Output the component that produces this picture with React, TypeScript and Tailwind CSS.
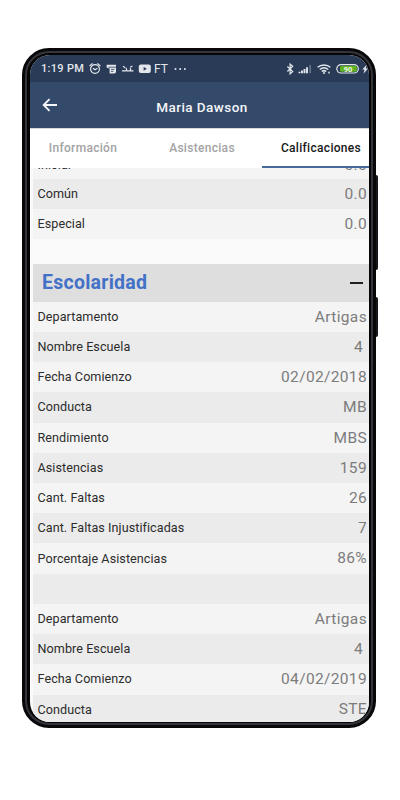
import React from 'react';

interface RowData {
    label: string;
    value: string;
    inset?: boolean;
    lowered?: boolean;
}

const records: RowData[] = [
    { label: 'Departamento', value: 'Artigas' },
    { label: 'Nombre Escuela', value: '4', inset: true },
    { label: 'Fecha Comienzo', value: '02/02/2018' },
    { label: 'Conducta', value: 'MB' },
    { label: 'Rendimiento', value: 'MBS' },
    { label: 'Asistencias', value: '159' },
    { label: 'Cant. Faltas', value: '26' },
    { label: 'Cant. Faltas Injustificadas', value: '7' },
    { label: 'Porcentaje Asistencias', value: '86%' },
    { label: '', value: '' },
    { label: 'Departamento', value: 'Artigas' },
    { label: 'Nombre Escuela', value: '4', inset: true },
    { label: 'Fecha Comienzo', value: '04/02/2019' },
    { label: 'Conducta', value: 'STE' },
];

const Row: React.FC<RowData> = ({ label, value, inset, lowered }) => (
    <div className={`flex h-[30.23px] shrink-0 items-center justify-between whitespace-nowrap pl-[4.5px] pr-[2px] odd:bg-[#f4f4f4] even:bg-[#ebebeb] ${lowered ? 'pt-[4px]' : 'pt-[1px]'}`}>
        <span className="text-[12.6px] tracking-[0.06px] text-[#2c2c2c]">{label}</span>
        <span className={`text-[15.5px] tracking-[0.35px] text-[#7c7c7c] ${inset ? 'pr-1' : ''}`}>{value}</span>
    </div>
);

const StatusBar = () => (
    <div className="flex h-[27px] shrink-0 items-center whitespace-nowrap bg-[#293b56] pl-[11px] text-[#e3e7ed]">
        <span className="w-[48px] pt-[1px] text-[11px] font-medium tracking-[0.3px]">1:19 PM</span>
        <svg className="h-[14px] w-[62px]" viewBox="0 0 62 14" fill="none" stroke="currentColor">
            <circle cx="6" cy="7" r="4.4" strokeWidth="1.2" />
            <path d="M.6 4 3.6 1.4M11.4 4 8.4 1.4M4 6.3l2 1.4 2.4-1.5" strokeWidth="1.2" />
            <path d="M17.6 2.8H27v6.8c0 1.2-.6 2-1.8 2h-4.6V6.2h-1.2c-1.2 0-1.8-.8-1.8-1.7z" fill="currentColor" stroke="none" />
            <path d="M19.5 5.2H27M22 7.4h3.4M22 9.4h2.4" stroke="#293b56" strokeWidth=".8" />
            <path d="M33 8.9h3.3c1.5 0 1.8-1.6.5-3M37.4 8.9h2.9c1.4 0 1.8-1.2.8-2.8M40 8.9h4.5M34 4.3l2.2 1.5M41.2 5.3l2.2-1.3" strokeWidth="1.2" />
            <rect x="49.8" y="2.6" width="12" height="8.4" rx="2" fill="currentColor" stroke="none" />
            <path d="M54.6 4.9v3.8l3.2-1.9z" fill="#293b56" stroke="none" />
        </svg>
        <span className="ml-[3px] text-[12px]">FT</span>
        <svg className="ml-[6px] h-1 w-[14px]" viewBox="0 0 14 4" fill="currentColor">
            <circle cx="1.5" cy="2" r="1" />
            <circle cx="6.2" cy="2" r="1" />
            <circle cx="10.9" cy="2" r="1" />
        </svg>
        <svg className="ml-auto h-[14px] w-[84px]" viewBox="0 0 84 14" fill="none" stroke="currentColor">
            <path d="m2.4 4.5 5.3 5-2.6 2.4V2l2.6 2.3-5.3 5.2" strokeWidth="1.2" />
            <path d="M14.5 9.7v1.6M17 8.5v2.8M19.5 7v4.3M22 5.3v6" strokeWidth="1.9" />
            <path d="M25.2 3v8.3" strokeWidth="1.6" opacity=".35" />
            <path d="M32.6 5.3c3.6-3.1 9.2-3.1 12.8 0M34.8 7.5c2.5-2.1 5.9-2.1 8.4 0M36.8 9.5c1.4-1.1 3-1.1 4.4 0" strokeWidth="1.5" />
            <circle cx="39" cy="10.9" r="1" fill="currentColor" stroke="none" />
            <circle cx="44" cy="10.7" r="1.1" fill="currentColor" stroke="none" opacity=".7" />
            <rect x="51.8" y="2.6" width="21.5" height="8.4" rx="4.2" strokeWidth="1.2" />
            <rect x="55" y="3.8" width="16.8" height="6" rx="1.6" fill="#5fb321" stroke="none" />
            <text x="63" y="9.6" textAnchor="middle" fontSize="7.5" fontWeight="700" fill="#f0f6e8" stroke="none">90</text>
            <path d="m81.8 2.5-4.5 5h2.2l-1 4.3L83 6.4h-2.3z" fill="currentColor" stroke="none" />
        </svg>
    </div>
);

const Header = () => (
    <div className="grid h-[46px] shrink-0 grid-cols-[1fr_auto_1fr] items-center bg-[#334a6b] pl-[12px] pr-[7px] pt-1 text-[#f5f6f8]">
        <svg className="mb-[4px] h-[14px] w-[16px]" viewBox="0 0 16 14" fill="none" stroke="currentColor" strokeWidth="1.9">
            <path d="M15 7H1.6M7.5 1.2 1.7 7l5.8 5.8" />
        </svg>
        <h1 className="text-[13.5px] font-medium tracking-[0.45px]">Maria Dawson</h1>
    </div>
);

const Tabs = () => (
    <div className="flex h-[40px] shrink-0 whitespace-nowrap border-t border-[#d5d8dd] bg-white text-[12px] font-medium tracking-[0.3px] text-[#a3a3a3]">
        <div className="flex w-[106px] items-center justify-center pb-[2px]">Información</div>
        <div className="flex w-[126px] items-center justify-center pb-[2px] pl-[6px]">Asistencias</div>
        <div className="flex flex-1 items-center justify-center border-b-2 border-[#476a9b] pl-[11px] text-[#181818]">Calificaciones</div>
    </div>
);

export default function App() {
    return (
        <div className="relative flex h-[800px] w-[400px] overflow-hidden bg-white pl-[22px] pt-[48px] font-[Roboto,sans-serif]">
            <div className="absolute left-[374px] top-[175px] h-[95px] w-[4px] rounded-r-[2px] bg-[#15171a]" />
            <div className="absolute left-[374px] top-[297px] h-[40px] w-[4px] rounded-r-[2px] bg-[#15171a]" />
            <div className="relative h-[680px] w-[354px] rounded-[27px] border-[3px] border-[#08080a] bg-[#34353b] p-[2px]">
                <div className="h-full rounded-[22px] bg-[#050506] p-[2px] pb-[1px] pl-[3px]">
                    <div className="flex h-full flex-col overflow-hidden rounded-[20px] bg-[#fafafa]">
                        <StatusBar />
                        <Header />
                        <Tabs />
                        <div className="ml-[3px] flex min-h-0 flex-1 flex-col overflow-hidden">
                            <div className="-mt-[19.5px] flex flex-col">
                                <Row label="Inicial" value="0.0" lowered />
                                <Row label="Común" value="0.0" />
                                <Row label="Especial" value="0.0" />
                            </div>
                            <div className="mt-[25px] flex h-[37.5px] shrink-0 items-center justify-between bg-[#dedede] pl-[9px] pr-[6px]">
                                <h2 className="pb-[1px] text-[19.5px] font-bold tracking-[0.25px] text-[#4271c7]">Escolaridad</h2>
                                <div className="mt-[1px] h-[2px] w-[13px] bg-[#202020]" />
                            </div>
                            <div className="flex flex-col">
                                {records.map((row, index) => (
                                    <Row key={index} {...row} />
                                ))}
                            </div>
                        </div>
                    </div>
                </div>
            </div>
        </div>
    );
}
